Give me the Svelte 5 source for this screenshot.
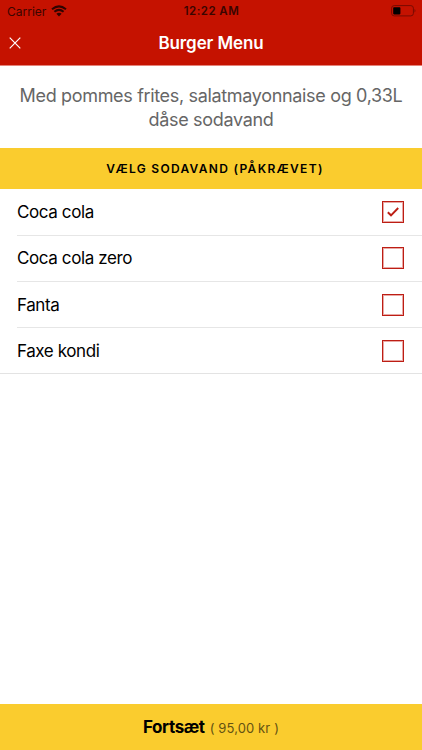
<script>
  let options = $state([
    { name: 'Coca cola', checked: true },
    { name: 'Coca cola zero', checked: false },
    { name: 'Fanta', checked: false },
    { name: 'Faxe kondi', checked: false }
  ]);

  // Only one soda can be picked
  function select(index) {
    options.forEach((option, i) => (option.checked = i === index));
  }
</script>

<div class="screen">
  <header>
    <div class="status">
      <div class="carrier">
        <span>Carrier</span>
        <svg class="wifi" width="16" height="12" viewBox="0 0 16 12">
          <path d="M1 4.3Q8 -1.5 15 4.3" />
          <path d="M3.4 6.8Q8 3 12.6 6.8" />
          <path class="dot" d="M8 11.5L5.4 8.8Q8 6.7 10.6 8.8Z" />
        </svg>
      </div>
      <span class="time">12:22 AM</span>
      <svg class="battery" width="26" height="12" viewBox="0 0 26 12">
        <rect class="outline" x="1.6" y="0.6" width="21.8" height="10.3" rx="2.6" />
        <rect class="level" x="3.2" y="2.2" width="7.2" height="7.2" rx="0.8" />
        <path class="cap" d="M24.5 4Q26.4 5.7 24.5 7.6Z" />
      </svg>
    </div>
    <div class="nav">
      <button class="close" aria-label="Luk">
        <svg width="12" height="12" viewBox="0 0 12 12">
          <path d="M0.7 0.7L11.3 11.3M11.3 0.7L0.7 11.3" />
        </svg>
      </button>
      <h1>Burger Menu</h1>
      <span></span>
    </div>
  </header>

  <p class="description">Med pommes frites, salatmayonnaise og 0,33L<br />dåse sodavand</p>

  <h2>VÆLG SODAVAND (PÅKRÆVET)</h2>

  <ul>
    {#each options as option, i}
      <li>
        <button class="row" onclick={() => select(i)}>
          <span class="name">{option.name}</span>
          <span class="box">
            {#if option.checked}
              <svg width="12" height="10" viewBox="0 0 12 10">
                <path d="M0.8 5.2L4 8.3L11.2 1" />
              </svg>
            {/if}
          </span>
        </button>
      </li>
    {/each}
  </ul>

  <button class="continue">
    <strong>Fortsæt</strong>
    <span>( 95,00 kr )</span>
  </button>
</div>

<style>
  :global(body) {
    margin: 0;
  }

  .screen {
    display: flex;
    flex-direction: column;
    height: 100vh;
    background: #fff;
    color: #000;
    font-family: Inter, 'Liberation Sans', sans-serif;
    overflow: hidden;
  }

  button {
    padding: 0;
    border: 0;
    background: none;
    color: inherit;
    font: inherit;
    cursor: pointer;
  }

  svg {
    display: block;
  }

  header {
    height: 66px;
    box-sizing: border-box;
    background: #c51200;
    border-bottom: 1px solid #e58379;
  }

  .status {
    display: grid;
    grid-template-columns: 1fr auto 1fr;
    align-items: center;
    height: 22px;
    padding: 0 6px 0 7px;
    color: #3a0500;
    font-size: 12px;
  }

  .carrier {
    display: flex;
    align-items: center;
    gap: 5px;
  }

  .wifi {
    fill: none;
    stroke: #300400;
    stroke-width: 2;
  }

  .wifi .dot {
    fill: #300400;
    stroke: none;
  }

  .time {
    font-size: 11.5px;
    font-weight: 600;
    letter-spacing: 0.45px;
  }

  .battery {
    justify-self: end;
    overflow: visible;
  }

  .battery .outline {
    fill: none;
    stroke: #790b00;
    stroke-width: 1;
  }

  .battery .level {
    fill: #000;
  }

  .battery .cap {
    fill: #790b00;
  }

  .nav {
    display: grid;
    grid-template-columns: 1fr auto 1fr;
    align-items: center;
    height: 42px;
    padding: 0 9px;
    color: #fff;
  }

  .close {
    justify-self: start;
  }

  .close path {
    fill: none;
    stroke: #fff;
    stroke-width: 1.2;
  }

  h1 {
    margin: 0;
    font-size: 17px;
    font-weight: 600;
    letter-spacing: -0.1px;
  }

  .description {
    height: 82px;
    box-sizing: border-box;
    margin: 0;
    padding-top: 18px;
    color: #666;
    font-size: 18px;
    line-height: 24px;
    letter-spacing: -0.33px;
    text-align: center;
    white-space: nowrap;
  }

  h2 {
    margin: 0;
    height: 41px;
    padding-left: 8px;
    box-sizing: border-box;
    background: #facc2e;
    font-size: 12px;
    font-weight: 600;
    line-height: 41px;
    letter-spacing: 1.32px;
    text-align: center;
  }

  ul {
    margin: 0;
    padding: 0;
    list-style: none;
    border-bottom: 1px solid #e3e3e3;
  }

  li {
    padding-left: 17px;
  }

  .row {
    display: flex;
    align-items: center;
    justify-content: space-between;
    width: 100%;
    height: 46px;
    padding-right: 18px;
    text-align: left;
  }

  li + li .row {
    padding-bottom: 1px;
    border-top: 1px solid #e6e6e6;
  }

  li:nth-child(n + 3) .row {
    padding-bottom: 0;
  }

  .name {
    font-size: 17px;
    letter-spacing: -0.4px;
  }

  .box {
    display: flex;
    align-items: center;
    justify-content: center;
    width: 22px;
    height: 22px;
    box-sizing: border-box;
    border: 1px solid #bd1e14;
    box-shadow: inset 0 0 0 1px #e9a9a5;
  }

  .box path {
    fill: none;
    stroke: #bd1e14;
    stroke-width: 1.9;
  }

  .continue {
    display: flex;
    align-items: baseline;
    justify-content: center;
    gap: 5px;
    height: 46px;
    margin-top: auto;
    background: #facc2e;
    line-height: 47px;
  }

  .continue strong {
    font-size: 17px;
    font-weight: 700;
    letter-spacing: -0.4px;
  }

  .continue span {
    color: #645212;
    font-size: 13px;
    letter-spacing: 0.12px;
  }
</style>
